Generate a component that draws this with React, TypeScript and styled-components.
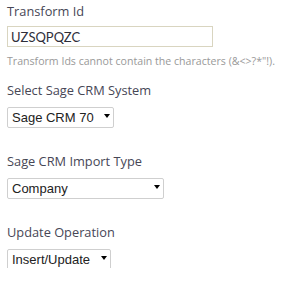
import React from "react";
import styled, { createGlobalStyle } from "styled-components";

const Global = createGlobalStyle`
  html, body { margin: 0; padding: 0; background: #fff; }
  body { font-family: "Open Sans", "DejaVu Sans", sans-serif; }
`;

const Page = styled.div`
  display: flex;
  flex-direction: column;
  padding: 1px 0 0 7px;
`;

const Field = styled.div<{ $after: number }>`
  display: flex;
  flex-direction: column;
  align-items: flex-start;
  margin-bottom: ${(p) => p.$after}px;
`;

const Label = styled.label`
  font-family: "Open Sans", sans-serif;
  font-size: 12.8px;
  line-height: 20px;
  height: 20px;
  color: #474756;
  margin-bottom: 5px;
`;

const TextInput = styled.input`
  box-sizing: border-box;
  width: 206px;
  height: 21px;
  border: 1px solid #d9d5c0;
  padding: 0 3px;
  margin: 0;
  font-family: "Lato", sans-serif;
  font-size: 13px;
  color: #2e2e3a;
  outline: none;
`;

const Hint = styled.div`
  font-family: "Open Sans", sans-serif;
  font-size: 10.6px;
  line-height: 14px;
  color: #999;
  margin-top: 7px;
`;

const SelectWrap = styled.div<{ $w: number }>`
  position: relative;
  width: ${(p) => p.$w}px;
  height: 21px;
  &::after {
    content: "";
    position: absolute;
    right: 4px;
    top: 9px;
    border-left: 3.5px solid transparent;
    border-right: 3.5px solid transparent;
    border-top: 4px solid #000;
    pointer-events: none;
  }
`;

const Select = styled.select`
  appearance: none;
  -webkit-appearance: none;
  box-sizing: border-box;
  width: 100%;
  height: 21px;
  margin: 0;
  padding: 0 0 0 4px;
  border: 1px solid #cfcfcf;
  border-radius: 2px;
  background: #fff;
  font-family: "Liberation Sans", Arial, sans-serif;
  font-size: 13px;
  color: #222;
  outline: none;
`;

export default function App() {
  return (
    <>
      <Global />
      <Page>
        <Field $after={12}>
          <Label>Transform Id</Label>
          <TextInput defaultValue="UZSQPQZC" />
          <Hint>Transform Ids cannot contain the characters (&amp;&lt;&gt;?*"!).</Hint>
        </Field>
        <Field $after={25}>
          <Label>Select Sage CRM System</Label>
          <SelectWrap $w={107}>
            <Select defaultValue="70">
              <option value="70">Sage CRM 70</option>
            </Select>
          </SelectWrap>
        </Field>
        <Field $after={25}>
          <Label>Sage CRM Import Type</Label>
          <SelectWrap $w={157}>
            <Select defaultValue="Company">
              <option>Company</option>
              <option>Person</option>
            </Select>
          </SelectWrap>
        </Field>
        <Field $after={0}>
          <Label>Update Operation</Label>
          <SelectWrap $w={104}>
            <Select defaultValue="Insert/Update">
              <option>Insert/Update</option>
              <option>Insert</option>
              <option>Update</option>
            </Select>
          </SelectWrap>
        </Field>
      </Page>
    </>
  );
}
